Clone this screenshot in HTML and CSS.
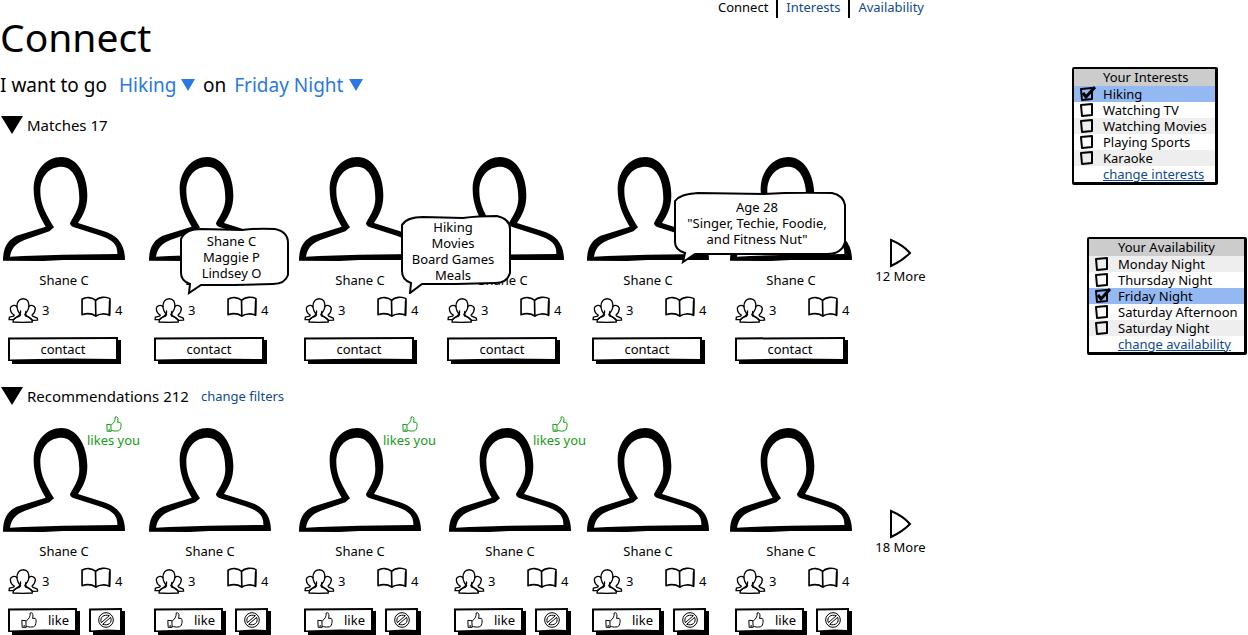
FILE: index.html
```html
<!DOCTYPE html>
<html lang="en">
<head>
<meta charset="utf-8">
<title>Connect</title>
<meta name="viewport" content="width=device-width, initial-scale=1">
<link rel="stylesheet" href="styles.css">
</head>
<body>
<svg class="sprite" aria-hidden="true">
  <symbol id="avatar" viewBox="9 36 366 312" preserveAspectRatio="none">
    <path fill-rule="evenodd" d="M9 347C9 305 25 284 50 272L137 245C115 210 100 170 101 130C102 75 140 36 184 36C232 36 262 90 262 150C262 190 248 212 234 234L310 258C350 270 375 295 375 345L190 345L130 348ZM30 335C35 305 52 293 75 284L148 259L162 247C140 210 121 180 121 140C120 92 150 65 184 65C222 66 238 110 238 160C238 192 222 212 210 234Q210 242 220 246L295 270C340 284 353 300 352 327L190 329L70 333Z"/>
  </symbol>
  <symbol id="people" viewBox="23 29 92 76">
    <g fill="none" stroke="#000" stroke-width="4" stroke-linejoin="round" stroke-linecap="round">
      <path d="M37 102C37 92 43 88 56 85L60 80C49 66 46 50 54 38C60 29 76 29 82 38C88 50 85 66 73 79L76 84C90 87 96 92 96 102L66 103Z"/>
      <path d="M49 55C42 49 31 51 29 60C29 70 34 77 41 81L39 84L26 87L25 95L38 95L48 87C57 82 61 74 60 68"/>
      <path d="M85 55C92 49 102 51 105 60C105 70 101 76 95 81L97 84L111 90L112 96L97 97L84 87C77 83 74 76 76 70"/>
    </g>
  </symbol>
  <symbol id="book" viewBox="244 20 91 64">
    <g fill="none" stroke="#000" stroke-width="5" stroke-linejoin="round" stroke-linecap="round">
      <path d="M247 30C258 22 278 23 288 33C298 24 318 20 332 28L331 79C318 72 300 74 289 81C278 74 262 72 247 77Z"/>
      <path d="M288 33L289 81M331 36L330 76"/>
    </g>
  </symbol>
  <symbol id="thumb" viewBox="64 157 47 48">
    <g fill="none" stroke="currentColor" stroke-width="3" stroke-linejoin="round">
      <path d="M66 182L78 183L79 203L67 203Z"/>
      <path d="M79 184C87 178 92 171 91 160C97 157 102 163 98 176L106 176C110 180 109 187 108 191C107 199 103 202 96 202C89 203 86 201 79 200"/>
    </g>
    <path fill="currentColor" d="M71 197h4v4h-4z"/>
  </symbol>
  <symbol id="block" viewBox="294 155 48 48">
    <g fill="none" stroke="#000" stroke-width="3">
      <circle cx="318" cy="179" r="22"/>
      <path d="M304 187C298 170 312 161 328 166ZM332 171C338 188 324 197 308 192Z"/>
    </g>
  </symbol>
  <symbol id="next" viewBox="0 0 22 30">
    <path fill="none" stroke="#000" stroke-width="2" stroke-linejoin="miter" d="M1 2Q13 7 20 15Q12 23 1 28Z"/>
  </symbol>
  <symbol id="down" viewBox="0 0 22 18">
    <path d="M0 0H22L11 18Z"/>
  </symbol>
</svg>

<div class="page">
  <main class="main">
    <nav class="nav" aria-label="Main">
      <span class="nav-item" aria-current="page">Connect</span>
      <a class="nav-item" href="#interests">Interests</a>
      <a class="nav-item" href="#availability">Availability</a>
    </nav>
    <h1 class="title">Connect</h1>
    <form class="plan">
      <label for="activity">I want to go</label>
      <select class="pick pick-activity" id="activity"><option>Hiking</option></select>
      <label for="day">on</label>
      <select class="pick pick-day" id="day"><option>Friday Night</option></select>
    </form>

    <section>
      <div class="section-head">
        <button class="toggle" type="button" aria-label="Collapse matches"><svg class="down"><use href="#down"/></svg></button>
        <h2 class="section-title">Matches 17</h2>
      </div>
      <div class="people matches">
        <article class="card">
          <svg class="avatar"><use href="#avatar"/></svg>
          <h3 class="name">Shane C</h3>
          <div class="stats"><svg class="icon-people"><use href="#people"/></svg><span>3</span><svg class="icon-book"><use href="#book"/></svg><span>4</span></div>
          <button class="btn contact" type="button">contact</button>
        </article>
        <article class="card">
          <svg class="avatar"><use href="#avatar"/></svg>
          <h3 class="name">Shane C</h3>
          <div class="stats"><svg class="icon-people"><use href="#people"/></svg><span>3</span><svg class="icon-book"><use href="#book"/></svg><span>4</span></div>
          <button class="btn contact" type="button">contact</button>
          <div class="bubble bubble-friends">
            <svg class="bubble-shape" viewBox="0 0 109 68" preserveAspectRatio="none"><path d="M10 57C4 55 1 52 1 46L1 12C4 5 11 2 22 2L62 3Q76 1 95 2C104 4 108 9 108 16L108 48C106 54 101 57 93 57L55 58L21 58L9 66Z"/></svg>
            <p class="bubble-text">Shane C<br>Maggie P<br>Lindsey O</p>
          </div>
        </article>
        <article class="card">
          <svg class="avatar"><use href="#avatar"/></svg>
          <h3 class="name">Shane C</h3>
          <div class="stats"><svg class="icon-people"><use href="#people"/></svg><span>3</span><svg class="icon-book"><use href="#book"/></svg><span>4</span></div>
          <button class="btn contact" type="button">contact</button>
          <div class="bubble bubble-interests">
            <svg class="bubble-shape" viewBox="0 0 110 79" preserveAspectRatio="none"><path d="M10 68C4 66 1 62 1 56L1 10C4 5 11 2 22 2L62 3Q76 1 96 1C105 3 109 8 109 14L109 58C107 65 102 68 94 68L55 69L21 69L9 78Z"/></svg>
            <p class="bubble-text">Hiking<br>Movies<br>Board Games<br>Meals</p>
          </div>
        </article>
        <article class="card">
          <svg class="avatar"><use href="#avatar"/></svg>
          <h3 class="name">Shane C</h3>
          <div class="stats"><svg class="icon-people"><use href="#people"/></svg><span>3</span><svg class="icon-book"><use href="#book"/></svg><span>4</span></div>
          <button class="btn contact" type="button">contact</button>
        </article>
        <article class="card">
          <svg class="avatar"><use href="#avatar"/></svg>
          <h3 class="name">Shane C</h3>
          <div class="stats"><svg class="icon-people"><use href="#people"/></svg><span>3</span><svg class="icon-book"><use href="#book"/></svg><span>4</span></div>
          <button class="btn contact" type="button">contact</button>
          <div class="bubble bubble-about">
            <svg class="bubble-shape" viewBox="0 0 172 72" preserveAspectRatio="none"><path d="M11 61C4 59 1 56 1 50L1 9C5 4 11 2 24 1L90 2Q120 0 158 1C167 3 170 7 171 13L171 50C169 58 163 62 153 62L90 62L21 62L9 70Z"/></svg>
            <p class="bubble-text">Age 28<br>"Singer, Techie, Foodie,<br>and Fitness Nut"</p>
          </div>
        </article>
        <article class="card">
          <svg class="avatar"><use href="#avatar"/></svg>
          <h3 class="name">Shane C</h3>
          <div class="stats"><svg class="icon-people"><use href="#people"/></svg><span>3</span><svg class="icon-book"><use href="#book"/></svg><span>4</span></div>
          <button class="btn contact" type="button">contact</button>
        </article>
        <button class="more" type="button"><svg class="next"><use href="#next"/></svg>12 More</button>
      </div>
    </section>

    <section>
      <div class="section-head">
        <button class="toggle" type="button" aria-label="Collapse recommendations"><svg class="down"><use href="#down"/></svg></button>
        <h2 class="section-title">Recommendations 212</h2>
        <a class="filters" href="#filters">change filters</a>
      </div>
      <div class="people recs">
        <article class="card">
          <svg class="avatar"><use href="#avatar"/></svg>
          <h3 class="name">Shane C</h3>
          <div class="stats"><svg class="icon-people"><use href="#people"/></svg><span>3</span><svg class="icon-book"><use href="#book"/></svg><span>4</span></div>
          <div class="actions"><button class="btn like" type="button"><svg class="thumb"><use href="#thumb"/></svg>like</button><button class="btn block" type="button" aria-label="Block"><svg class="no"><use href="#block"/></svg></button></div>
          <p class="likes-you"><svg class="thumb"><use href="#thumb"/></svg>likes you</p>
        </article>
        <article class="card">
          <svg class="avatar"><use href="#avatar"/></svg>
          <h3 class="name">Shane C</h3>
          <div class="stats"><svg class="icon-people"><use href="#people"/></svg><span>3</span><svg class="icon-book"><use href="#book"/></svg><span>4</span></div>
          <div class="actions"><button class="btn like" type="button"><svg class="thumb"><use href="#thumb"/></svg>like</button><button class="btn block" type="button" aria-label="Block"><svg class="no"><use href="#block"/></svg></button></div>
        </article>
        <article class="card">
          <svg class="avatar"><use href="#avatar"/></svg>
          <h3 class="name">Shane C</h3>
          <div class="stats"><svg class="icon-people"><use href="#people"/></svg><span>3</span><svg class="icon-book"><use href="#book"/></svg><span>4</span></div>
          <div class="actions"><button class="btn like" type="button"><svg class="thumb"><use href="#thumb"/></svg>like</button><button class="btn block" type="button" aria-label="Block"><svg class="no"><use href="#block"/></svg></button></div>
          <p class="likes-you"><svg class="thumb"><use href="#thumb"/></svg>likes you</p>
        </article>
        <article class="card">
          <svg class="avatar"><use href="#avatar"/></svg>
          <h3 class="name">Shane C</h3>
          <div class="stats"><svg class="icon-people"><use href="#people"/></svg><span>3</span><svg class="icon-book"><use href="#book"/></svg><span>4</span></div>
          <div class="actions"><button class="btn like" type="button"><svg class="thumb"><use href="#thumb"/></svg>like</button><button class="btn block" type="button" aria-label="Block"><svg class="no"><use href="#block"/></svg></button></div>
          <p class="likes-you"><svg class="thumb"><use href="#thumb"/></svg>likes you</p>
        </article>
        <article class="card">
          <svg class="avatar"><use href="#avatar"/></svg>
          <h3 class="name">Shane C</h3>
          <div class="stats"><svg class="icon-people"><use href="#people"/></svg><span>3</span><svg class="icon-book"><use href="#book"/></svg><span>4</span></div>
          <div class="actions"><button class="btn like" type="button"><svg class="thumb"><use href="#thumb"/></svg>like</button><button class="btn block" type="button" aria-label="Block"><svg class="no"><use href="#block"/></svg></button></div>
        </article>
        <article class="card">
          <svg class="avatar"><use href="#avatar"/></svg>
          <h3 class="name">Shane C</h3>
          <div class="stats"><svg class="icon-people"><use href="#people"/></svg><span>3</span><svg class="icon-book"><use href="#book"/></svg><span>4</span></div>
          <div class="actions"><button class="btn like" type="button"><svg class="thumb"><use href="#thumb"/></svg>like</button><button class="btn block" type="button" aria-label="Block"><svg class="no"><use href="#block"/></svg></button></div>
        </article>
        <button class="more" type="button"><svg class="next"><use href="#next"/></svg>18 More</button>
      </div>
    </section>
  </main>

  <aside class="side">
    <fieldset class="panel panel-interests" id="interests" aria-labelledby="interests-title">
      <div class="panel-title" id="interests-title">Your Interests</div>
      <label class="row row-on"><input class="check" type="checkbox" checked>Hiking</label>
      <label class="row"><input class="check" type="checkbox">Watching TV</label>
      <label class="row row-alt"><input class="check" type="checkbox">Watching Movies</label>
      <label class="row"><input class="check" type="checkbox">Playing Sports</label>
      <label class="row row-alt"><input class="check" type="checkbox">Karaoke</label>
      <div class="panel-foot"><a class="change" href="#interests">change interests</a></div>
    </fieldset>
    <fieldset class="panel panel-availability" id="availability" aria-labelledby="availability-title">
      <div class="panel-title" id="availability-title">Your Availability</div>
      <label class="row row-alt"><input class="check" type="checkbox">Monday Night</label>
      <label class="row"><input class="check" type="checkbox">Thursday Night</label>
      <label class="row row-on"><input class="check" type="checkbox" checked>Friday Night</label>
      <label class="row"><input class="check" type="checkbox">Saturday Afternoon</label>
      <label class="row row-alt"><input class="check" type="checkbox">Saturday Night</label>
      <div class="panel-foot"><a class="change" href="#availability">change availability</a></div>
    </fieldset>
  </aside>
</div>
</body>
</html>
```
FILE: styles.css
```css
* { box-sizing: border-box; }
body {
  margin: 0;
  background: #fff;
  color: #000;
  font: 13px/16px "Noto Sans", "Open Sans", sans-serif;
}
h1, h2, h3, p { margin: 0; font-weight: 400; }
button, select, input { margin: 0; padding: 0; border: 0; background: none; color: inherit; font: inherit; appearance: none; }
svg { display: block; flex: none; }
a { color: #114a8f; text-decoration: none; }
.sprite { position: absolute; width: 0; height: 0; }

.page { display: grid; grid-template-columns: minmax(0, 1fr) 324px; }

.nav { display: flex; justify-content: flex-end; }
.nav-item { padding: 0 8px 4px; line-height: 14px; }
.nav-item + .nav-item { border-left: 2px solid #000; }
.nav-item:last-child { padding-right: 0; }

.title { font-size: 39px; line-height: 38px; }

.plan { display: flex; align-items: center; margin-top: 15px; font-size: 19px; line-height: 28px; }
.pick {
  margin: 0 8px 0 12px;
  color: #2b78e4;
  background: url("data:image/svg+xml,%3Csvg xmlns='http://www.w3.org/2000/svg' viewBox='0 0 14 12'%3E%3Cpath d='M0 0H14L7 12Z' fill='%232b78e4'/%3E%3C/svg%3E") right center / 14px 12px no-repeat;
}
.pick-activity { width: 76px; }
.pick-day { width: 129px; margin-left: 8px; }

.section-head { display: flex; align-items: center; height: 24px; margin: 14px 0 20px 1px; }
.toggle { margin-right: 4px; }
.down { width: 22px; height: 18px; }
.section-title { font-size: 15px; }
.filters { margin-left: 12px; }

.people { display: grid; padding-left: 3px; }
section + section .section-head { margin-top: 20px; }
.matches { grid-template-columns: 146fr 150fr 143fr 145fr 143fr 147fr 47px; }
.recs { grid-template-columns: 146fr 150fr 150fr 138fr 143fr 147fr 47px; }

.card { position: relative; width: 122px; }
.avatar { width: 122px; height: 104px; }
.name { margin-top: 11px; font-size: 13px; text-align: center; }
.stats {
  display: grid;
  grid-template-columns: 34px 39px 34px auto;
  align-items: center;
  height: 27px;
  margin: 8px 0 14px 5px;
}
.icon-people { width: 31px; height: 25px; align-self: end; }
.icon-book { width: 30px; height: 21px; align-self: start; }

.btn {
  height: 27px;
  padding: 0 3px 3px 0;
  background: url("data:image/svg+xml,%3Csvg xmlns='http://www.w3.org/2000/svg' viewBox='0 0 113 27' preserveAspectRatio='none'%3E%3Cpath d='M0 0.5L110 0V3H113V27H4V24H0Z'/%3E%3Cpath d='M2 2.5L108 2V22L60 21.5L2 22.5Z' fill='%23fff'/%3E%3C/svg%3E") 0 0 / 100% 100% no-repeat;
}
.contact { display: block; width: 113px; margin-left: 5px; }
.actions { display: flex; gap: 9px; margin-left: 5px; }
.like {
  display: flex;
  align-items: center;
  gap: 11px;
  width: 72px;
  padding-left: 13px;
  background-image: url("data:image/svg+xml,%3Csvg xmlns='http://www.w3.org/2000/svg' viewBox='0 0 72 27'%3E%3Cpath d='M0 0.5L69 0V3H72V27H4V24H0Z'/%3E%3Cpath d='M2 2.5L67 2V22L36 21.5L2 22.5Z' fill='%23fff'/%3E%3C/svg%3E");
}
.block {
  display: flex;
  align-items: center;
  justify-content: center;
  width: 36px;
  background-image: url("data:image/svg+xml,%3Csvg xmlns='http://www.w3.org/2000/svg' viewBox='0 0 36 27'%3E%3Cpath d='M0 0.5L33 0V3H36V27H4V24H0Z'/%3E%3Cpath d='M2 2.5L31 2V22L18 21.5L2 22.5Z' fill='%23fff'/%3E%3C/svg%3E");
}
.thumb { width: 16px; height: 16px; }
.no { width: 16px; height: 16px; }

.likes-you {
  position: absolute;
  top: -12px;
  left: 84px;
  display: flex;
  flex-direction: column;
  align-items: center;
  color: #169c16;
  white-space: nowrap;
}

.bubble { position: absolute; z-index: 1; }
.bubble-shape { position: absolute; inset: 0; width: 100%; height: 100%; fill: #fff; stroke: #000; stroke-width: 2; }
.bubble-text { position: relative; padding-right: 6px; text-align: center; white-space: nowrap; }
.bubble-friends { top: 70px; left: 31px; width: 109px; height: 68px; padding-top: 6px; }
.bubble-interests { top: 58px; left: 102px; width: 110px; height: 79px; padding-top: 4px; }
.bubble-about { top: 35px; left: 87px; width: 172px; height: 72px; padding-top: 7px; }

.more { display: flex; flex-direction: column; align-items: center; align-self: start; margin-top: 81px; white-space: nowrap; }
.next { width: 22px; height: 30px; }

.side { display: flex; flex-direction: column; align-items: flex-end; gap: 52px; padding: 67px 1px 0 0; }
.panel { min-width: 0; margin: 0; padding: 0; border: solid #000; border-width: 2px 3px 3px 2px; border-radius: 2px; }
.panel-interests { width: 146px; margin-right: 29px; }
.panel-availability { width: 160px; }
.panel-title { padding-left: 29px; background: #ccc; line-height: 17px; white-space: nowrap; }
.row { display: flex; align-items: center; gap: 7px; height: 16px; padding-left: 6px; white-space: nowrap; }
.row-alt { background: #eee; }
.row-on { background: #94b9f2; }
.check {
  width: 16px;
  height: 16px;
  background: url("data:image/svg+xml,%3Csvg xmlns='http://www.w3.org/2000/svg' viewBox='0 0 16 16'%3E%3Cpath d='M1 3L12 2L12 13L2 14Z' fill='none' stroke='%23000' stroke-width='2' stroke-linejoin='round'/%3E%3C/svg%3E") 0 0 / 16px 16px no-repeat;
}
.check:checked {
  background-image: url("data:image/svg+xml,%3Csvg xmlns='http://www.w3.org/2000/svg' viewBox='0 0 16 16'%3E%3Cpath d='M1 3L12 2L12 13L2 14Z' fill='none' stroke='%23000' stroke-width='2' stroke-linejoin='round'/%3E%3Cpath d='M3 7L6 11L15 1' fill='none' stroke='%23000' stroke-width='3'/%3E%3C/svg%3E");
}
.panel-foot { padding-left: 29px; line-height: 16px; white-space: nowrap; }
.change { text-decoration: underline; }
```
